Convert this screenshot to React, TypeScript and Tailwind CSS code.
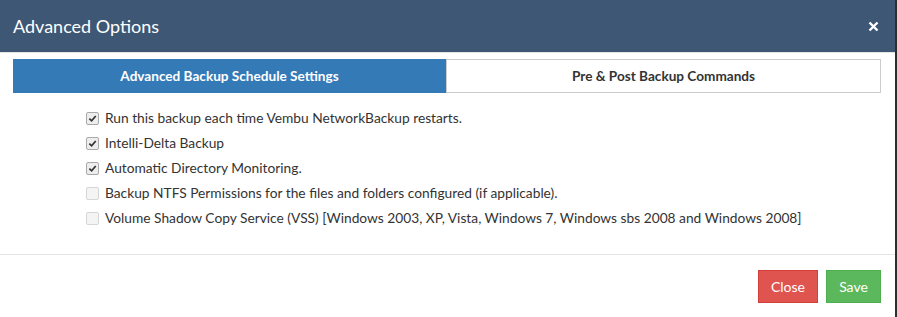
const options = [
  { label: "Run this backup each time Vembu NetworkBackup restarts.", checked: true },
  { label: "Intelli-Delta Backup", checked: true },
  { label: "Automatic Directory Monitoring.", checked: true },
  { label: "Backup NTFS Permissions for the files and folders configured (if applicable).", checked: false },
  {
    label:
      "Volume Shadow Copy Service (VSS) [Windows 2003, XP, Vista, Windows 7, Windows sbs 2008 and Windows 2008]",
    checked: false,
  },
];

const Check = ({ checked }: { checked: boolean }) => (
  <span
    className={`w-[13px] h-[13px] rounded-[2px] border flex items-center justify-center ${
      checked ? "border-[#a9a9a9] bg-[#ededed]" : "border-[#d6d6d6] bg-[#f4f4f4]"
    }`}
  >
    {checked && (
      <svg width="9" height="9" viewBox="0 0 10 10">
        <path d="M1.5 5.2 L4 7.6 L8.6 2.2" fill="none" stroke="#333" strokeWidth="1.9" />
      </svg>
    )}
  </span>
);

const App = () => {
  return (
    <div className="flex w-[897px] h-[317px] bg-[#2e2e2e]" style={{ fontFamily: "Lato, 'Open Sans', sans-serif" }}>
      <div className="w-[895px] h-full bg-white flex flex-col">
        <div className="h-[53px] bg-[#3d5775] border-b border-[#e5e5e5] flex items-center justify-between pl-[13px] pr-[16px]">
          <h1 className="text-[18px] text-white leading-none">Advanced Options</h1>
          <svg width="11" height="11" viewBox="0 0 11 11">
            <path d="M1.5 1.5 L9.5 9.5 M9.5 1.5 L1.5 9.5" stroke="white" strokeWidth="2.4" />
          </svg>
        </div>

        <div className="px-[13px] pt-[6px]">
          <div className="flex w-[868px] h-[34px]">
            <div className="flex-1 bg-[#337ab7] text-white font-bold text-[13.6px] flex items-center justify-center">
              Advanced Backup Schedule Settings
            </div>
            <div className="flex-1 border border-[#cccccc] text-[#333] font-bold text-[13.6px] flex items-center justify-center">
              Pre &amp; Post Backup Commands
            </div>
          </div>
        </div>

        <div className="flex flex-col pl-[86px] pt-[13px] h-[162px] border-b border-[#e5e5e5]">
          {options.map((o) => (
            <div key={o.label} className="flex items-center h-[25px] gap-[6px]">
              <Check checked={o.checked} />
              <span className="text-[13.75px] text-[#333]">{o.label}</span>
            </div>
          ))}
        </div>

        <div className="flex justify-end gap-[8px] pr-[14px] pt-[15px]">
          <button className="w-[60px] h-[33px] bg-[#e05450] border border-[#d43f3a] text-white text-[14px]">
            Close
          </button>
          <button className="w-[55px] h-[33px] bg-[#5cb85c] border border-[#4cae4c] text-white text-[14px]">
            Save
          </button>
        </div>
      </div>
    </div>
  );
};

export default App;
